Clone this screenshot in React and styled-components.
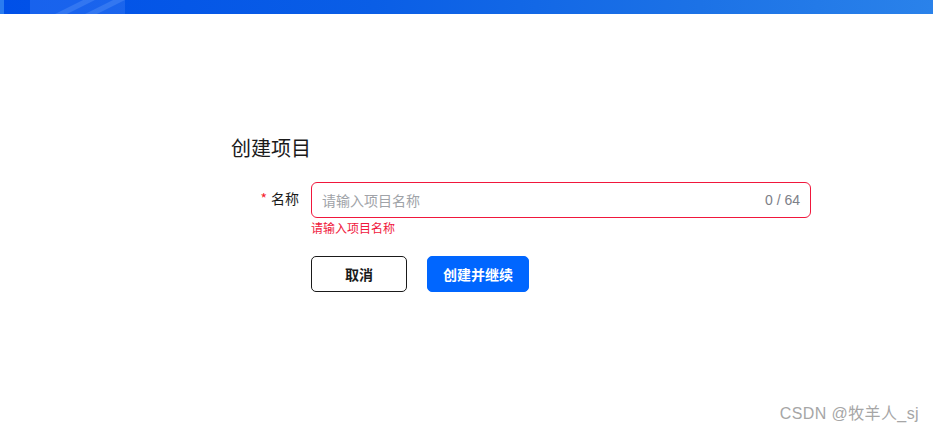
import React from "react";
import styled, { createGlobalStyle } from "styled-components";

const Global = createGlobalStyle`
  html, body { margin: 0; padding: 0; background: #fff; }
  body { font-family: "Noto Sans CJK SC", "Noto Sans", sans-serif; }
  * { box-sizing: border-box; }
`;

const Page = styled.div`
  width: 933px;
  height: 432px;
  position: relative;
  overflow: hidden;
  background: #fff;
`;

const Banner = styled.div`
  height: 14px;
  background: linear-gradient(90deg, #0050e8 0%, #0a5ee6 40%, #1c72e6 75%, #2a82ea 100%);
  position: relative;
  overflow: hidden;
`;

const BannerEdge = styled.div`
  position: absolute;
  left: 0;
  top: 0;
  width: 4px;
  height: 14px;
  background: #2a7cf0;
`;

const BannerShape = styled.div`
  position: absolute;
  left: 30px;
  top: 0;
  width: 95px;
  height: 14px;
  background: rgba(110, 160, 255, 0.22);
`;

const BannerStripe = styled.div`
  position: absolute;
  left: ${(p) => p.$left}px;
  top: 0;
  width: 40px;
  height: 14px;
  background: rgba(140, 185, 255, 0.22);
  clip-path: polygon(70% 0, 100% 0, 30% 100%, 0 100%);
`;

const Content = styled.div`
  padding: 122px 0 0 231px;
  display: flex;
  flex-direction: column;
`;

const Title = styled.h2`
  margin: 0;
  font-size: 20px;
  font-weight: 400;
  line-height: 24px;
  color: #1a1a1a;
`;

const FormRow = styled.div`
  display: flex;
  align-items: flex-start;
  margin-top: 22px;
`;

const Label = styled.label`
  width: 80px;
  padding-right: 12px;
  text-align: right;
  font-size: 14px;
  line-height: 32px;
  color: #1a1a1a;
`;

const Star = styled.span`
  color: #f5222d;
  margin-right: 4px;
`;

const Field = styled.div`
  display: flex;
  flex-direction: column;
`;

const InputBox = styled.div`
  width: 500px;
  height: 36px;
  border: 1px solid #f0173c;
  border-radius: 6px;
  display: flex;
  align-items: center;
  padding: 0 10px 0 10px;
`;

const Input = styled.input`
  flex: 1;
  border: none;
  outline: none;
  font-family: inherit;
  font-size: 14px;
  color: #1a1a1a;
  background: transparent;
  padding: 0;
  &::placeholder { color: #a0a3a8; }
`;

const Counter = styled.span`
  font-family: "Liberation Sans", Arial, sans-serif;
  font-size: 14px;
  color: #7d8088;
`;

const ErrorText = styled.div`
  font-size: 12px;
  line-height: 18px;
  margin-top: 1px;
  color: #f0173c;
`;

const Actions = styled.div`
  display: flex;
  gap: 20px;
  margin: 19px 0 0 80px;
`;

const Button = styled.button`
  height: 36px;
  width: ${(p) => (p.$primary ? "102px" : "96px")};
  padding: 0;
  border-radius: 5px;
  font-family: inherit;
  font-size: 14px;
  font-weight: 700;
  cursor: pointer;
  border: 1px solid ${(p) => (p.$primary ? "#0066ff" : "#1a1a1a")};
  background: ${(p) => (p.$primary ? "#0066ff" : "#fff")};
  color: ${(p) => (p.$primary ? "#fff" : "#1a1a1a")};
`;

const Watermark = styled.div`
  position: absolute;
  right: 14px;
  bottom: 8px;
  font-size: 16px;
  letter-spacing: 0.4px;
  color: #a6a6a6;
  font-family: "Liberation Sans", "Noto Sans CJK SC", sans-serif;
`;

export default function App() {
  return (
    <Page>
      <Global />
      <Banner>
        <BannerEdge />
        <BannerShape />
        <BannerStripe $left={55} />
        <BannerStripe $left={85} />
      </Banner>
      <Content>
        <Title>创建项目</Title>
        <FormRow>
          <Label>
            <Star>*</Star>名称
          </Label>
          <Field>
            <InputBox>
              <Input placeholder="请输入项目名称" />
              <Counter>0 / 64</Counter>
            </InputBox>
            <ErrorText>请输入项目名称</ErrorText>
          </Field>
        </FormRow>
        <Actions>
          <Button>取消</Button>
          <Button $primary>创建并继续</Button>
        </Actions>
      </Content>
      <Watermark>CSDN @牧羊人_sj</Watermark>
    </Page>
  );
}
